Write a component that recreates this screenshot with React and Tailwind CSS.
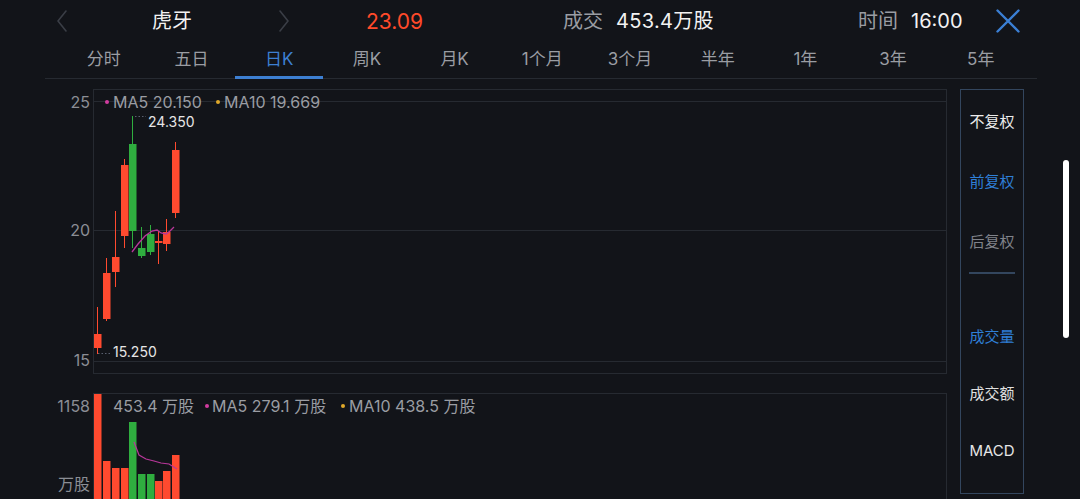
const RED = "#ff4a2f";
const GREEN = "#2fae3f";

// candles in page coords: x, bodyTop, bodyBottom, wickTop, wickBottom, up?
const candles = [
  [93, 335, 349, 308, 355, true],
  [102, 274, 320, 259, 322, true],
  [111, 258, 273, 212, 288, true],
  [120, 166, 237, 160, 249, true],
  [128, 145, 232, 117, 249, false],
  [137, 249, 257, 228, 259, false],
  [146, 235, 253, 226, 256, false],
  [154, 242, 244, 232, 265, true],
  [162, 233, 245, 220, 252, true],
  [171, 151, 214, 143, 219, true],
];

const volumes = [
  [93, 395, true],
  [102, 462, true],
  [111, 469, true],
  [120, 469, true],
  [128, 423, false],
  [137, 475, false],
  [146, 475, false],
  [154, 482, true],
  [162, 472, true],
  [171, 456, true],
];

const tabs = ["分时", "五日", "日K", "周K", "月K", "1个月", "3个月", "半年", "1年", "3年", "5年"];

const Chevron = ({ dir }) => (
  <svg width="12" height="22" viewBox="0 0 12 22" fill="none">
    <polyline
      points={dir === "left" ? "10,1 2,11 10,21" : "2,1 10,11 2,21"}
      stroke="#3a3e46"
      strokeWidth="1.6"
      strokeLinejoin="round"
      strokeLinecap="round"
    />
  </svg>
);

const Header = () => (
  <div className="flex items-center h-[42px] text-[20px] leading-none">
    <div className="ml-[56px] w-[12px]"><Chevron dir="left" /></div>
    <div className="ml-[84px] w-[40px] text-[#f2f2f2]">虎牙</div>
    <div className="ml-[86px] w-[12px]"><Chevron dir="right" /></div>
    <div className="ml-[76px] w-[62px] text-[#ff4a2a] text-[21px]">23.09</div>
    <div className="ml-[135px] text-[#9a9da3]">成交</div>
    <div className="ml-[13px] w-[230px] text-[#f2f2f2] tracking-[0.3px]">453.4万股</div>
    <div className="ml-[12px] text-[#9a9da3]">时间</div>
    <div className="ml-[13px] w-[62px] text-[#f2f2f2]">16:00</div>
    <div className="ml-[23px]">
      <svg width="24" height="24" viewBox="0 0 24 24" fill="none">
        <path d="M1.5 1.5 L22.5 22.5 M22.5 1.5 L1.5 22.5" stroke="#3b7fd4" strokeWidth="2.4" strokeLinecap="round" />
      </svg>
    </div>
  </div>
);

const Tabs = () => (
  <div className="mx-[45px] w-[992px] h-[37px] border-b border-[#262a31] flex pl-[15px]">
    {tabs.map((t) => (
      <div
        key={t}
        className={
          "w-[87.7px] h-full flex items-center justify-center text-[17px] relative " +
          (t === "日K" ? "text-[#3d7fd2]" : "text-[#9a9da3]")
        }
      >
        {t}
        {t === "日K" && <div className="absolute bottom-[-1px] left-0 right-0 h-[3px] bg-[#3d7fd2]" />}
      </div>
    ))}
  </div>
);

const KChart = () => (
  <div className="relative w-[854px] h-[285px] border border-[#262a31]">
    <svg width="852" height="283" className="absolute left-0 top-0">
      <line x1="0" y1="11.5" x2="852" y2="11.5" stroke="#262a31" />
      <line x1="0" y1="140.5" x2="852" y2="140.5" stroke="#262a31" />
      <line x1="0" y1="271.5" x2="852" y2="271.5" stroke="#262a31" />
      {candles.map(([x, bt, bb, wt, wb, up], i) => {
        const c = up ? RED : GREEN;
        const cx = x - 93 + 3.5;
        return (
          <g key={i}>
            <line x1={cx} y1={wt - 91} x2={cx} y2={wb - 91} stroke={c} strokeWidth="1" />
            <rect x={x - 93} y={bt - 91} width="7.5" height={bb - bt} fill={c} />
          </g>
        );
      })}
      <polyline
        points="38,162 44,154 51,146 58,141 63,140 67,143 72,144 76,141 80,137"
        fill="none"
        stroke="#b8379a"
        strokeWidth="1.3"
      />
      <line x1="41" y1="26.5" x2="52" y2="26.5" stroke="#5a6070" strokeDasharray="1.5 2" />
      <line x1="4" y1="263.5" x2="18" y2="263.5" stroke="#5a6070" strokeDasharray="1.5 2" />
    </svg>
    <div className="absolute left-[11px] top-[2px] flex items-center text-[16px] text-[#9a9da3] leading-[20px]">
      <span className="w-[4px] h-[4px] rounded-full bg-[#d23ba0] mr-[4px]" />
      <span className="w-[92px]">MA5 20.150</span>
      <span className="w-[4px] h-[4px] rounded-full bg-[#e0a82a] ml-[11px] mr-[4px]" />
      <span>MA10 19.669</span>
    </div>
    <div className="absolute left-[54px] top-[22px] text-[14px] leading-[20px] text-[#e6e6e6]">24.350</div>
    <div className="absolute left-[19px] top-[252px] text-[14px] leading-[20px] text-[#e6e6e6]">15.250</div>
  </div>
);

const VolChart = () => (
  <div className="relative w-[854px] h-[110px] border border-[#262a31]">
    <svg width="852" height="108" className="absolute left-0 top-0">
      {volumes.map(([x, top, up], i) => (
        <rect key={i} x={x - 93} y={top - 395} width="7.5" height={120} fill={up ? RED : GREEN} />
      ))}
      <polyline
        points="40,48 45,61 52,65 60,67 67,69 75,70 83,75"
        fill="none"
        stroke="#b8379a"
        strokeWidth="1.2"
      />
    </svg>
    <div className="absolute left-[19px] top-[2px] flex items-center text-[16px] text-[#9a9da3] leading-[20px]">
      <span className="w-[84px]">453.4 万股</span>
      <span className="w-[4px] h-[4px] rounded-full bg-[#d23ba0] ml-[8px] mr-[3px]" />
      <span className="w-[119px]">MA5 279.1 万股</span>
      <span className="w-[4px] h-[4px] rounded-full bg-[#e0a82a] ml-[10px] mr-[4px]" />
      <span>MA10 438.5 万股</span>
    </div>
  </div>
);

const SidePanel = () => (
  <div className="w-[64px] h-[405px] border border-[#33465e] flex flex-col items-center text-[15px] leading-[20px]">
    <div className="mt-[22px] text-[#ececec]">不复权</div>
    <div className="mt-[40px] text-[#2f7fd6]">前复权</div>
    <div className="mt-[40px] text-[#80838a]">后复权</div>
    <div className="mt-[20px] w-[46px] h-[2px] bg-[#33465e]" />
    <div className="mt-[53px] text-[#2f7fd6]">成交量</div>
    <div className="mt-[37px] text-[#e0e0e0]">成交额</div>
    <div className="mt-[37px] text-[#e6e6e6]">MACD</div>
  </div>
);

export default function App() {
  return (
    <div className="relative w-[1080px] h-[499px] overflow-hidden bg-[#121419] font-['Inter','Noto_Sans_CJK_SC',sans-serif]">
      <Header />
      <Tabs />
      <div className="flex pt-[10px]">
        <div className="w-[93px] flex flex-col items-end pr-[3px] text-[16px] text-[#8b8e95] leading-[20px]">
          <div className="mt-[3px]">25</div>
          <div className="mt-[108px]">20</div>
          <div className="mt-[110px]">15</div>
          <div className="mt-[26px]">1158</div>
          <div className="mt-[58px]">万股</div>
        </div>
        <div className="flex flex-col gap-[19px]">
          <KChart />
          <VolChart />
        </div>
        <div className="ml-[13px]">
          <SidePanel />
        </div>
      </div>
      <div className="absolute left-[1063px] top-[160px] w-[6px] h-[178px] rounded-full bg-white" />
    </div>
  );
}
